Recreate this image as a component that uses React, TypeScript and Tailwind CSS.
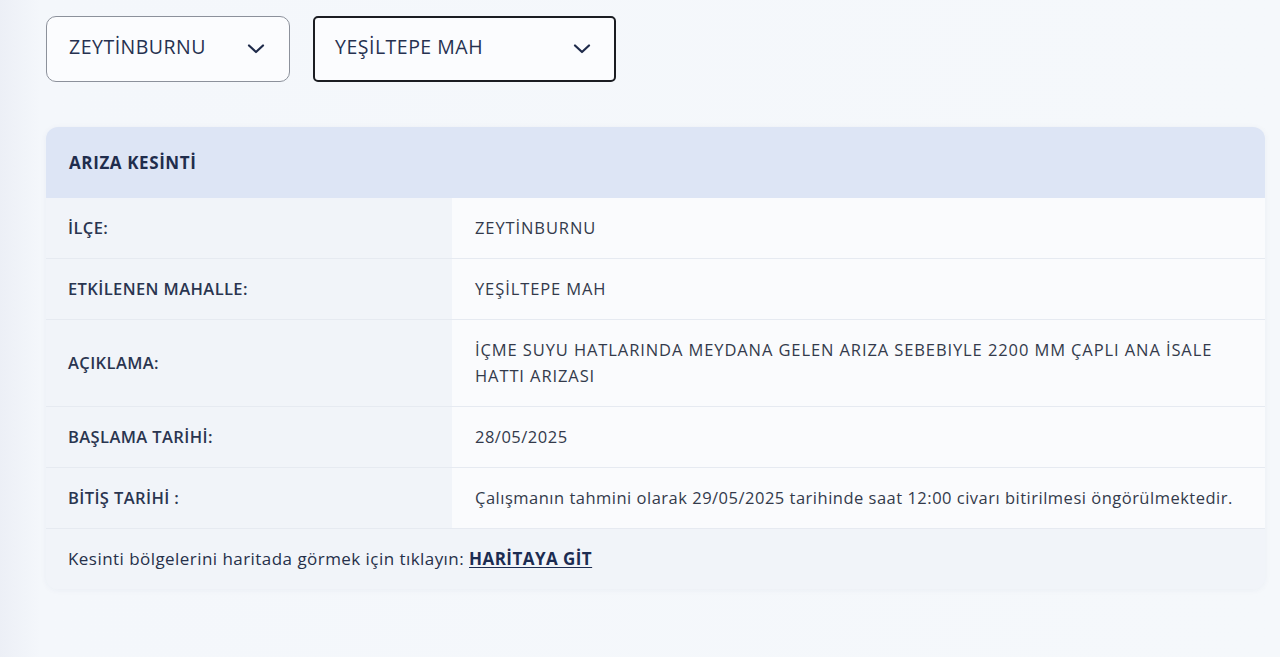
import React from 'react';

interface Row {
  label: string;
  value: string;
  caps?: boolean;
}

const rows: Row[] = [
  { label: 'İLÇE:', value: 'ZEYTİNBURNU', caps: true },
  { label: 'ETKİLENEN MAHALLE:', value: 'YEŞİLTEPE MAH', caps: true },
  {
    label: 'AÇIKLAMA:',
    value: 'İÇME SUYU HATLARINDA MEYDANA GELEN ARIZA SEBEBIYLE 2200 MM ÇAPLI ANA İSALE HATTI ARIZASI',
    caps: true,
  },
  { label: 'BAŞLAMA TARİHİ:', value: '28/05/2025' },
  {
    label: 'BİTİŞ TARİHİ :',
    value: 'Çalışmanın tahmini olarak 29/05/2025 tarihinde saat 12:00 civarı bitirilmesi öngörülmektedir.',
  },
];

const Chevron = () => (
  <svg width="18" height="10" viewBox="0 0 18 10" fill="none" className="shrink-0">
    <path d="M2 1.5 L9 8 L16 1.5" stroke="#1e2a4a" strokeWidth="2.2" strokeLinecap="round" strokeLinejoin="round" />
  </svg>
);

export default function App() {
  return (
    <div className="min-h-[657px] w-full bg-[linear-gradient(90deg,#eceff6_0px,#f4f7fb_40px,#f5f8fb_100%)] font-['Open_Sans','Noto_Sans',sans-serif] text-[#2b3447]">
      <div className="pl-[46px] pr-[15px] pt-[16px]">
        {/* selects */}
        <div className="flex gap-[23px]">
          <div className="flex h-[66px] w-[244px] items-center justify-between rounded-[10px] border border-[#8c919b] bg-[#fbfcfe] pl-[22px] pr-[24px]">
            <span className="-mt-[4px] text-[19.5px] tracking-[0.5px] text-[#263150]">ZEYTİNBURNU</span>
            <Chevron />
          </div>
          <div className="flex h-[66px] w-[303px] items-center justify-between rounded-[5px] border-2 border-[#1b1d22] bg-[#fbfcfe] pl-[20px] pr-[23px]">
            <span className="-mt-[4px] text-[19.5px] tracking-[0.5px] text-[#263150]">YEŞİLTEPE MAH</span>
            <Chevron />
          </div>
        </div>

        {/* card */}
        <div className="mt-[45px] overflow-hidden rounded-[12px] bg-[#f1f4f9] shadow-[0_1px_6px_rgba(40,60,110,0.05)]">
          <div className="flex h-[71px] items-center bg-[#dde5f5] pl-[23px]">
            <span className="text-[17px] font-bold tracking-[0.6px] text-[#1f2d4d]">ARIZA KESİNTİ</span>
          </div>
          {rows.map((row) => (
            <div key={row.label} className="flex border-b border-[#e6eaf1]">
              <div className="flex w-[406px] shrink-0 items-center bg-[#f1f4f9] pl-[22px]">
                <span className="text-[16.5px] font-semibold tracking-[0.4px] text-[#2a3550]">{row.label}</span>
              </div>
              <div className="flex flex-1 items-center bg-[#fafbfd] py-[17px] pl-[23px] pr-[12px]">
                <span
                  className={
                    row.caps
                      ? 'text-[16.5px] leading-[26px] tracking-[0.9px] text-[#333a4b]'
                      : 'text-[16.5px] leading-[26px] tracking-[0.5px] text-[#333a4b]'
                  }
                >
                  {row.value}
                </span>
              </div>
            </div>
          ))}
          <div className="flex h-[60px] items-center bg-[#f1f4f9] pl-[22px]">
            <span className="text-[17px] tracking-[0.45px] text-[#26304a]">
              Kesinti bölgelerini haritada görmek için tıklayın:{' '}
              <a className="font-bold text-[#1c2c52] underline underline-offset-2">HARİTAYA GİT</a>
            </span>
          </div>
        </div>
      </div>
    </div>
  );
}
